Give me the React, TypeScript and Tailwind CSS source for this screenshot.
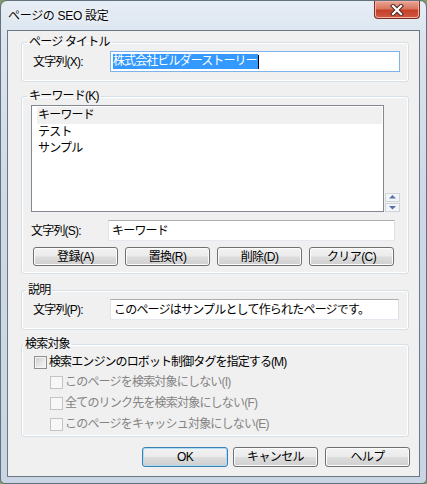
import React from 'react';

const font = "font-['Liberation_Sans','Noto_Sans_CJK_JP',sans-serif]";

// Win7 風ボタン
const Btn: React.FC<{ label: string; primary?: boolean; h?: string }> = ({ label, primary, h = 'h-[19px]' }) => (
  <div
    className={
      primary
        ? `w-[86px] ${h} rounded-[3px] border border-[#3c7fb1] bg-[linear-gradient(180deg,#f2f2f2_0%,#ebebeb_48%,#dddddd_52%,#cfcfcf_100%)] shadow-[inset_0_0_0_1px_#aedcf5] flex items-center justify-center text-[12px] tracking-[-0.6px] text-black`
        : `w-[85px] ${h} rounded-[3px] border border-[#707070] bg-[linear-gradient(180deg,#f2f2f2_0%,#ebebeb_48%,#dddddd_52%,#cfcfcf_100%)] shadow-[inset_0_0_0_1px_#fcfcfc] flex items-center justify-center text-[12px] tracking-[-0.6px] text-black`
    }
  >
    {label}
  </div>
);

// グループボックス
const Group: React.FC<{ title: string; className?: string; legendClass: string; children: React.ReactNode }> = ({
  title,
  className = '',
  legendClass,
  children,
}) => (
  <fieldset
    className={`ml-[13px] w-[388px] rounded-[3px] border border-[#d5dfe5] shadow-[inset_0_0_0_1px_#ffffff] ${className}`}
  >
    <legend className={`${legendClass} px-[2px] leading-[16px] text-[12px] tracking-[-0.8px]`}>{title}</legend>
    {children}
  </fieldset>
);

const Field: React.FC<{ value: string; className: string }> = ({ value, className }) => (
  <div
    className={`h-[21px] bg-white border border-[#abadb3] border-r-[#dbdfe6] border-b-[#e3e9ef] border-l-[#e2e3ea] flex items-center pl-[3px] text-[12px] tracking-[-0.8px] ${className}`}
  >
    {value}
  </div>
);

const CheckBox: React.FC<{ disabled?: boolean }> = ({ disabled }) =>
  disabled ? (
    <div className="w-[13px] h-[13px] border border-[#c4c4c4] bg-[#f7f7f7] shrink-0" />
  ) : (
    <div className="w-[13px] h-[13px] border border-[#8e8f8f] bg-[linear-gradient(135deg,#cbcbcb_0%,#e8e8e8_60%,#f6f6f6_100%)] shadow-[inset_0_0_0_1px_#f4f4f4] shrink-0" />
  );

const SubCheck: React.FC<{ label: string; className: string }> = ({ label, className }) => (
  <div className={`h-[16px] flex items-center pl-[16px] gap-[2px] text-[#838383] ${className}`}>
    <CheckBox disabled />
    <span className="text-[12px] tracking-[-0.8px] leading-[16px]">{label}</span>
  </div>
);

const App: React.FC = () => {
  return (
    <div className={`w-[427px] h-[484px] bg-[#7d9c6a] ${font} text-black`}>
      <div className="w-[427px] h-[484px] rounded-t-[7px] rounded-b-[5px] border border-[#63707e] bg-[linear-gradient(180deg,#e6edf5_0%,#dbe4ee_8%,#cfdae6_40%,#c9d5e2_100%)] flex flex-col">
        {/* タイトルバー */}
        <div className="h-[29px] flex items-start justify-between">
          <div className="pl-[7px] pt-[7px] text-[12px] leading-[16px] tracking-[-0.3px] [text-shadow:0_0_6px_#ffffff,0_0_3px_#ffffff]">
            ページの SEO 設定
          </div>
          <div className="mr-[6px] w-[46px] h-[18px] rounded-b-[4px] border border-t-0 border-[#7b2e22] bg-[linear-gradient(180deg,#e9a697_0%,#d9775f_45%,#c4402a_55%,#d15a3f_100%)] shadow-[inset_0_0_0_1px_#f0b3a3] flex items-center justify-center">
            <svg width="14" height="12" viewBox="0 0 14 12">
              <path d="M3 2 L11 10 M11 2 L3 10" stroke="#4a2a25" strokeWidth="4.2" strokeLinecap="square" />
              <path d="M3 2 L11 10 M11 2 L3 10" stroke="#ffffff" strokeWidth="2.2" strokeLinecap="square" />
            </svg>
          </div>
        </div>

        {/* クライアント領域 */}
        <div className="ml-[6px] w-[413px] h-[447px] border border-[#6b7785] bg-[#f0f0f0] flex flex-col">
          <Group title="ページ タイトル" legendClass="-ml-[6px]" className="mt-[3px] pt-[1px] pb-[9px] pl-[11px]">
            <div className="flex items-center">
              <span className="w-[77px] text-[12px] tracking-[-0.8px]">文字列(X):</span>
              <div className="w-[290px] h-[21px] bg-white border border-[#7eb4ea] flex items-center pl-[2px]">
                <span className="bg-[#3399ff] text-white text-[12px] leading-[15px] tracking-[-0.9px] pr-[1px]">
                  株式会社ビルダーストーリー
                </span>
                <span className="w-[1px] h-[14px] bg-black" />
              </div>
            </div>
          </Group>

          <Group title="キーワード(K)" legendClass="-ml-[4px]" className="mt-[6px] pt-[1px] pb-[7px] pl-[9px]">
            <div className="flex items-end gap-[1px]">
              <div className="w-[353px] h-[107px] bg-white border border-[#828790] pt-[1px] text-[12px] tracking-[-0.8px]">
                <div className="ml-[5px] mr-[1px] h-[17px] bg-[#f0f0f0] pl-[1px] leading-[17px]">キーワード</div>
                <div className="ml-[5px] h-[16px] pl-[1px] leading-[16px]">テスト</div>
                <div className="ml-[5px] h-[16px] pl-[1px] leading-[16px]">サンプル</div>
              </div>
              <div className="flex flex-col gap-[1px]">
                <div className="w-[15px] h-[9px] border border-[#cfd4da] bg-[#f4f5f7] flex items-center justify-center">
                  <svg width="7" height="5" viewBox="0 0 7 5">
                    <path d="M3.5 0 L7 3.5 L0 3.5 Z" fill="#5671ac" />
                  </svg>
                </div>
                <div className="w-[15px] h-[9px] border border-[#cfd4da] bg-[#f4f5f7] flex items-center justify-center">
                  <svg width="7" height="5" viewBox="0 0 7 5">
                    <path d="M0 1 L7 1 L3.5 4.5 Z" fill="#5671ac" />
                  </svg>
                </div>
              </div>
            </div>
            <div className="mt-[8px] flex items-center">
              <span className="w-[77px] text-[12px] tracking-[-0.8px]">文字列(S):</span>
              <Field value="キーワード" className="w-[287px]" />
            </div>
            <div className="mt-[6px] ml-[2px] flex gap-[7px]">
              <Btn label="登録(A)" />
              <Btn label="置換(R)" />
              <Btn label="削除(D)" />
              <Btn label="クリア(C)" />
            </div>
          </Group>

          <Group title="説明" legendClass="-ml-[7px]" className="mt-[8px] pt-[1px] pb-[9px] pl-[11px]">
            <div className="flex items-center">
              <span className="w-[77px] text-[12px] tracking-[-0.8px]">文字列(P):</span>
              <Field value="このページはサンプルとして作られたページです。" className="w-[289px]" />
            </div>
          </Group>

          <Group title="検索対象" legendClass="-ml-[11px]" className="mt-[6px] pt-[2px] pb-[4px] pl-[12px]">
            <div className="h-[16px] flex items-center gap-[2px]">
              <CheckBox />
              <span className="text-[12px] tracking-[-0.9px] leading-[16px]">検索エンジンのロボット制御タグを指定する(M)</span>
            </div>
            <SubCheck label="このページを検索対象にしない(I)" className="mt-[4px]" />
            <SubCheck label="全てのリンク先を検索対象にしない(F)" className="mt-[5px]" />
            <SubCheck label="このページをキャッシュ対象にしない(E)" className="mt-[5px]" />
          </Group>

          <div className="mt-[10px] pr-[9px] flex justify-end">
            <Btn label="OK" primary h="h-[20px]" />
            <div className="ml-[5px]">
              <Btn label="キャンセル" h="h-[20px]" />
            </div>
            <div className="ml-[7px]">
              <Btn label="ヘルプ" h="h-[20px]" />
            </div>
          </div>
        </div>
      </div>
    </div>
  );
};

export default App;
